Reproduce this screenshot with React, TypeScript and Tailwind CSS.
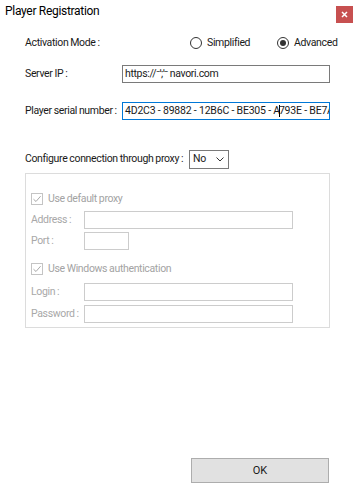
import React from "react";

const font = { fontFamily: 'Roboto, "Noto Sans", sans-serif' };
const t = "text-[10.5px] tracking-[-0.35px] [word-spacing:-0.3px] leading-none whitespace-nowrap";

function Radio({ checked, label }: { checked: boolean; label: string }) {
  return (
    <div className="flex items-center gap-[5px]">
      <span className="w-[12px] h-[12px] shrink-0 rounded-full border border-[#333333] bg-white flex items-center justify-center">
        {checked && <span className="w-[6px] h-[6px] rounded-full bg-[#333333]" />}
      </span>
      <span className={`${t} text-[#1a1a1a]`}>{label}</span>
    </div>
  );
}

function DisabledCheck({ label }: { label: string }) {
  return (
    <div className="flex items-center gap-[5px] h-[12px]">
      <span className="w-[12px] h-[12px] shrink-0 border border-[#c4c4c4] bg-white flex items-center justify-center">
        <svg width="10" height="10" viewBox="0 0 10 10">
          <path d="M1.5 5.2 L4 7.5 L8.6 2.2" fill="none" stroke="#a8a8a8" strokeWidth="1" />
        </svg>
      </span>
      <span className={`${t} text-[#a3a3a3]`}>{label}</span>
    </div>
  );
}

function DisabledRow({ label, w }: { label: string; w: string }) {
  return (
    <div className="flex items-center h-[18px]">
      <span className={`w-[53px] shrink-0 ${t} text-[#a8a8a8]`}>{label}</span>
      <span className={`${w} h-[18px] shrink-0 border border-[#cccccc] bg-white`} />
    </div>
  );
}

export default function App() {
  return (
    <div className="w-[353px] h-[494px] bg-white flex flex-col" style={font}>
      <div className="flex justify-between h-[30px]">
        <span className="pl-[5px] pt-[4px] text-[12px] tracking-[-0.3px] text-black leading-[14px] whitespace-nowrap">Player Registration</span>
        <div className="mt-[6px] w-[17px] h-[17px] bg-[#c75050] flex items-center justify-center">
          <svg width="7" height="7" viewBox="0 0 7 7">
            <path d="M1 1 L6 6 M6 1 L1 6" stroke="white" strokeWidth="1.5" />
          </svg>
        </div>
      </div>

      <div className="flex flex-col pl-[25px]">
        <div className="flex items-center h-[26px]">
          <span className={`w-[165px] shrink-0 ${t} text-[#1a1a1a]`}>Activation Mode :</span>
          <div className="w-[87px] shrink-0">
            <Radio checked={false} label="Simplified" />
          </div>
          <Radio checked={true} label="Advanced" />
        </div>

        <div className="flex items-center mt-[9px] h-[18px]">
          <span className={`w-[97px] shrink-0 ${t} text-[#1a1a1a]`}>Server IP :</span>
          <div className="w-[208px] h-[18px] shrink-0 border border-[#7a7a7a] flex items-center px-[2px]">
            <span className={`${t} text-[#1a1a1a]`}>https://⁻ˈ;ˈ⁻ navori.com</span>
          </div>
        </div>

        <div className="flex items-center mt-[19px] h-[18px]">
          <span className={`w-[97px] shrink-0 ${t} text-[#1a1a1a]`}>Player serial number :</span>
          <div className="w-[208px] h-[18px] shrink-0 border border-[#0078d7] flex items-center px-[2px] overflow-hidden">
            <span className="text-[10.5px] tracking-[-0.2px] leading-none whitespace-nowrap text-[#1a1a1a]">
              {"4D2C3 - 89882 - 12B6C - BE305 - A"}
              <span className="inline-block w-[1px] h-[12px] bg-black align-middle -mx-[1px]" />
              {"793E - BE7A"}
            </span>
          </div>
        </div>

        <div className="flex items-center mt-[30px] h-[19px]">
          <span className={`w-[164px] shrink-0 ${t} text-[#1a1a1a]`}>Configure connection through proxy :</span>
          <div className="w-[40px] h-[19px] shrink-0 border border-[#7a7a7a] flex items-center justify-between pl-[3px] pr-[4px]">
            <span className={`${t} text-[#1a1a1a]`}>No</span>
            <svg width="8" height="5" viewBox="0 0 8 5">
              <path d="M0.5 0.5 L4 4 L7.5 0.5" fill="none" stroke="#333333" strokeWidth="1" />
            </svg>
          </div>
        </div>

        <div className="mt-[4px] w-[305px] h-[155px] border border-[#dcdcdc] flex flex-col pl-[5px] pt-[19px]">
          <DisabledCheck label="Use default proxy" />
          <div className="mt-[6px]">
            <DisabledRow label="Address :" w="w-[209px]" />
          </div>
          <div className="mt-[3px]">
            <DisabledRow label="Port :" w="w-[45px]" />
          </div>
          <div className="mt-[13px]">
            <DisabledCheck label="Use Windows authentication" />
          </div>
          <div className="mt-[8px]">
            <DisabledRow label="Login :" w="w-[209px]" />
          </div>
          <div className="mt-[4px]">
            <DisabledRow label="Password :" w="w-[209px]" />
          </div>
        </div>

        <div className="mt-[130px] flex justify-end pr-[24px]">
          <div className="w-[138px] h-[25px] bg-[#e1e1e1] border border-[#adadad] flex items-center justify-center">
            <span className="text-[11px] text-[#1a1a1a] leading-none">OK</span>
          </div>
        </div>
      </div>
    </div>
  );
}
